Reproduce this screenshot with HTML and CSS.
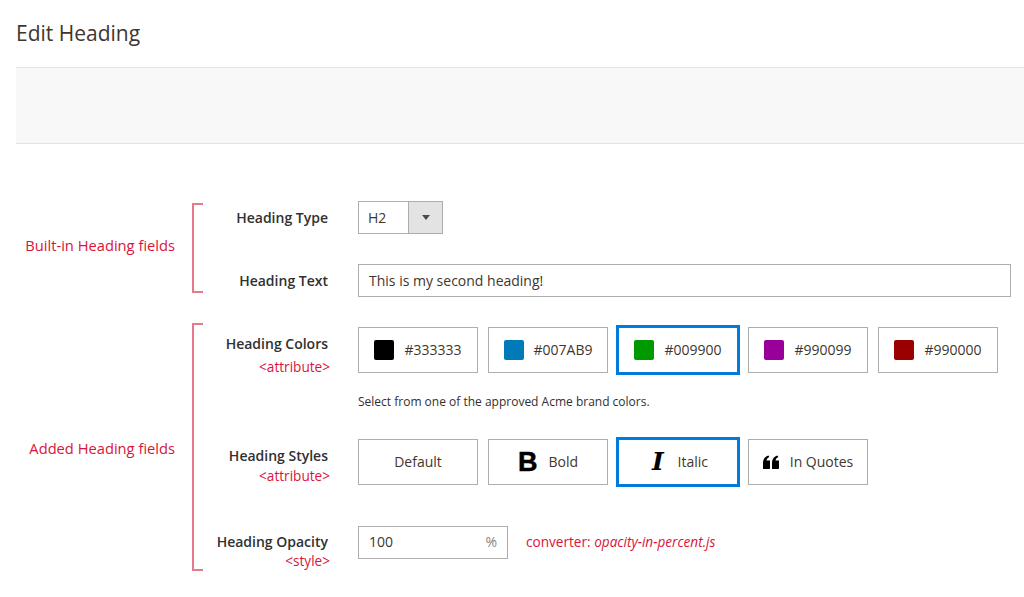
FILE: index.html
```html
<html>
  <head>
    <title>Edit Heading</title>
    <meta charset="UTF-8" />
    <link rel="stylesheet" href="styles.css" />
  </head>
  <body>
    <h1 class="page-title">Edit Heading</h1>
    <div class="toolbar"></div>

    <div class="group group-builtin">
      <div class="note">Built-in Heading fields</div>
      <div class="bracket"></div>
      <div class="rows">
        <div class="row row-type">
          <div class="label">Heading Type</div>
          <div class="select">
            <span class="select-value">H2</span>
            <span class="select-arrow"><i></i></span>
          </div>
        </div>
        <div class="row">
          <div class="label">Heading Text</div>
          <div class="input input-wide">This is my second heading!</div>
        </div>
      </div>
    </div>

    <div class="group group-added">
      <div class="note">Added Heading fields</div>
      <div class="bracket"></div>
      <div class="rows">
        <div class="row">
          <div class="label">
            Heading Colors
            <div class="sub sub-colors">&lt;attribute&gt;</div>
          </div>
          <div class="choices">
            <div class="choice"><span class="swatch swatch-black"></span>#333333</div>
            <div class="choice"><span class="swatch swatch-blue"></span>#007AB9</div>
            <div class="choice selected"><span class="swatch swatch-green"></span>#009900</div>
            <div class="choice"><span class="swatch swatch-purple"></span>#990099</div>
            <div class="choice"><span class="swatch swatch-red"></span>#990000</div>
          </div>
        </div>
        <div class="hint">Select from one of the approved Acme brand colors.</div>
        <div class="row row-styles">
          <div class="label">
            Heading Styles
            <div class="sub">&lt;attribute&gt;</div>
          </div>
          <div class="choices">
            <div class="choice">Default</div>
            <div class="choice"><span class="glyph glyph-bold">B</span>Bold</div>
            <div class="choice selected"><span class="glyph glyph-italic">I</span>Italic</div>
            <div class="choice">
              <svg class="quotes" viewBox="0 0 16 16" width="16" height="16">
                <path d="M0 15V9.500C0 5.500 1.500 2.800 5.500 1.500L6.300 3C4.500 3.900 3.700 5 3.600 6.500H7V14C7 14.600 6.600 15 6 15Z" />
                <path d="M9 15V9.500C9 5.500 10.500 2.800 14.500 1.500L15.300 3C13.500 3.900 12.700 5 12.600 6.500H16V14C16 14.600 15.600 15 15 15Z" />
              </svg>
              In Quotes
            </div>
          </div>
        </div>
        <div class="row row-opacity">
          <div class="label">
            Heading Opacity
            <div class="sub sub-style">&lt;style&gt;</div>
          </div>
          <div class="input input-percent">100<span class="percent">%</span></div>
          <div class="converter">converter: <em>opacity-in-percent.js</em></div>
        </div>
      </div>
    </div>
  </body>
</html>
```

FILE: styles.css
```css
body {
  margin: 0;
  padding-left: 16px;
  background-color: #fff;
  font-family: "Open Sans", sans-serif;
  font-size: 14px;
  color: #41362f;
  overflow: hidden;
}

.page-title {
  margin: 0;
  padding-top: 18px;
  height: 49px;
  font-size: 21px;
  line-height: 30px;
  font-weight: 400;
}

.toolbar {
  height: 75px;
  background-color: #f8f8f8;
  border-top: 1px solid #e3e3e3;
  border-bottom: 1px solid #e3e3e3;
}

.group {
  display: flex;
}

.group-builtin {
  margin-top: 57px;
}

.group-added {
  margin-top: 26px;
}

.note {
  width: 159px;
  align-self: center;
  text-align: right;
  font-size: 14.7px;
  color: #d9143a;
}

.group-added .note {
  margin-top: 2px;
}

.bracket {
  width: 9px;
  margin-left: 17px;
  border: 2px solid #e57a8a;
  border-right: none;
}

.group-builtin .bracket {
  margin-top: 2px;
  margin-bottom: 4px;
}

.group-builtin .note {
  margin-top: -8px;
}

.group-added .rows {
  padding-top: 4px;
}

.row {
  display: flex;
  align-items: flex-start;
}

.row-type {
  margin-bottom: 30px;
}

.row-styles {
  margin-top: 29px;
}

.row-opacity {
  margin-top: 40px;
}

.label {
  width: 125px;
  margin-right: 30px;
  padding-top: 7px;
  text-align: right;
  line-height: 20px;
  font-weight: 600;
  color: #303030;
  white-space: nowrap;
}

.row-opacity .label {
  padding-top: 6px;
}

.sub {
  margin-right: -2px;
  font-size: 13.6px;
  font-weight: 400;
  color: #d9143a;
}

.sub-colors {
  margin-top: 3px;
}

.sub-style {
  margin-top: -1px;
}

.select {
  display: flex;
  width: 85px;
  height: 33px;
  box-sizing: border-box;
  border: 1px solid #adadad;
}

.select-value {
  flex: 1;
  padding-left: 9px;
  line-height: 31px;
}

.select-arrow {
  display: flex;
  align-items: center;
  justify-content: center;
  width: 33px;
  background-color: #e3e3e3;
  border-left: 1px solid #adadad;
}

.select-arrow i {
  border-top: 5px solid #514943;
  border-left: 4px solid transparent;
  border-right: 4px solid transparent;
}

.input {
  display: flex;
  box-sizing: border-box;
  height: 33px;
  padding: 0 10px;
  border: 1px solid #adadad;
  line-height: 31px;
}

.input-wide {
  width: 653px;
}

.input-percent {
  width: 150px;
  justify-content: space-between;
  line-height: 29px;
}

.percent {
  color: #858585;
}

.converter {
  margin-left: 18px;
  line-height: 31px;
  font-size: 13.6px;
  color: #d9143a;
}

.choices {
  display: flex;
  gap: 10px;
}

.choice {
  display: flex;
  align-items: center;
  justify-content: center;
  box-sizing: border-box;
  width: 120px;
  height: 46px;
  padding-bottom: 2px;
  border: 1px solid #adadad;
}

.choice.selected {
  border-color: #007bdb;
  outline: 2px solid #007bdb;
}

.swatch {
  width: 20px;
  height: 20px;
  margin-top: 2px;
  margin-right: 10px;
  border-radius: 2px;
}

.swatch-black { background-color: #000; }
.swatch-blue { background-color: #007ab9; }
.swatch-green { background-color: #009900; }
.swatch-purple { background-color: #990099; }
.swatch-red { background-color: #990000; }

.glyph {
  color: #000;
  line-height: 1;
}

.glyph-bold {
  margin-top: 3px;
  margin-right: 11px;
  font-family: "Liberation Sans", sans-serif;
  font-size: 27px;
  font-weight: 700;
  -webkit-text-stroke: 0.5px #000;
}

.glyph-italic {
  margin-left: 4px;
  margin-right: 14px;
  font-family: "DejaVu Serif", serif;
  font-size: 25px;
  font-weight: 700;
  font-style: italic;
}

.quotes {
  margin-right: 11px;
  margin-top: 2px;
  fill: #000;
}

.hint {
  margin-top: 17px;
  margin-left: 155px;
  line-height: 16px;
  font-size: 12px;
  color: #303030;
}
```
